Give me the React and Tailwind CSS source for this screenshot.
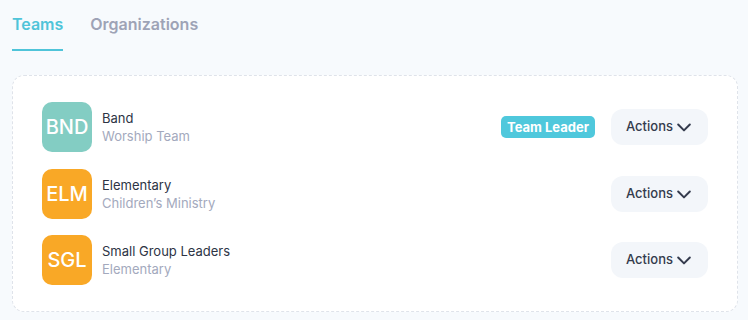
import React from "react";

const teams = [
  { code: "BND", name: "Band", sub: "Worship Team", color: "bg-[#83cdc3]", leader: true },
  { code: "ELM", name: "Elementary", sub: "Children’s Ministry", color: "bg-[#f9a826]" },
  { code: "SGL", name: "Small Group Leaders", sub: "Elementary", color: "bg-[#f9a826]" },
];

const Chevron = () => (
  <svg width="20" height="20" viewBox="0 0 24 24" fill="none" stroke="currentColor" strokeWidth="2.4" strokeLinecap="round" strokeLinejoin="round">
    <path d="M5 9l7 7 7-7" />
  </svg>
);

export default function App() {
  return (
    <div className="min-h-screen w-[748px] bg-[#f7fafd] font-['Inter',sans-serif]">
      {/* TABS */}
      <div className="flex gap-[27px] px-3 pt-[12px]">
        <div className="flex flex-col">
          <span className="text-[16px] font-semibold text-[#4fc4d9] leading-[24px]">Teams</span>
          <div className="mt-[13px] h-[2px] bg-[#4fc4d9]" />
        </div>
        <span className="text-[16px] font-semibold text-[#9ea3b6] leading-[24px]">Organizations</span>
      </div>

      {/* CARD */}
      <div className="ml-3 mt-[24px] w-[726px] rounded-xl border border-dashed border-[#dfe3ea] bg-white px-[29px] py-[26px]">
        <div className="flex flex-col gap-[16.5px]">
          {teams.map((t) => (
            <div key={t.code} className="flex items-center">
              <div className={`flex h-[50px] w-[50px] items-center justify-center rounded-[10px] ${t.color} text-[20px] font-medium text-white`}>
                {t.code}
              </div>
              <div className="ml-[10px] flex-1">
                <p className="text-[13px] leading-[18px] text-[#2d3445]">{t.name}</p>
                <p className="text-[13px] leading-[18px] text-[#a3a9bd]">{t.sub}</p>
              </div>
              {t.leader && (
                <span className="mr-4 rounded-[5px] bg-[#4fc8dc] px-[6px] py-[3px] text-[13px] font-bold leading-[16px] text-white">
                  Team Leader
                </span>
              )}
              <button className="flex h-9 w-[97px] items-center gap-[1px] rounded-xl bg-[#f3f6fa] pl-[15px] text-[13px] font-medium text-[#343b4d]">
                Actions
                <Chevron />
              </button>
            </div>
          ))}
        </div>
      </div>
    </div>
  );
}
